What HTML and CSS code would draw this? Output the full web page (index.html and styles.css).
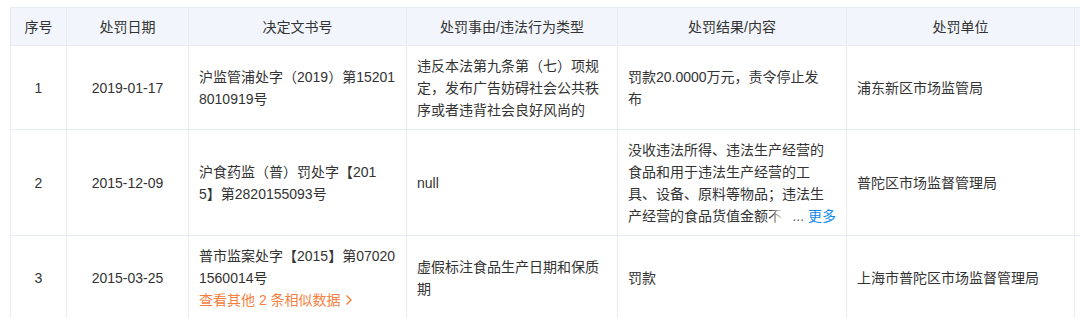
FILE: index.html
```html
<!DOCTYPE html>
<html lang="zh">
<head>
<meta charset="utf-8">
<link rel="stylesheet" href="styles.css">
</head>
<body>
<div class="wrap">
<table class="tbl">
  <colgroup>
    <col class="c1"><col class="c2"><col class="c3"><col class="c4"><col class="c5"><col class="c6"><col class="c7">
  </colgroup>
  <thead>
    <tr>
      <th>序号</th><th>处罚日期</th><th>决定文书号</th><th>处罚事由/违法行为类型</th><th>处罚结果/内容</th><th>处罚单位</th><th></th>
    </tr>
  </thead>
  <tbody>
    <tr class="r1">
      <td class="ctr">1</td>
      <td class="ctr">2019-01-17</td>
      <td>沪监管浦处字（2019）第15201<br>8010919号</td>
      <td>违反本法第九条第（七）项规定，发布广告妨碍社会公共秩序或者违背社会良好风尚的</td>
      <td class="res-narrow">罚款20.0000万元，责令停止发布</td>
      <td>浦东新区市场监管局</td>
      <td></td>
    </tr>
    <tr class="r2">
      <td class="ctr">2</td>
      <td class="ctr">2015-12-09</td>
      <td>沪食药监（普）罚处字【201<br>5】第2820155093号</td>
      <td>null</td>
      <td>
        <div class="clip">
          <div class="clip-text">没收违法所得、违法生产经营的食品和用于违法生产经营的工具、设备、原料等物品；违法生产经营的食品货值金额不足一万元的，并处五万元以上十万元以下罚款</div>
          <span class="more"><span class="dots">...</span> <a class="more-link">更多</a></span>
        </div>
      </td>
      <td>普陀区市场监督管理局</td>
      <td></td>
    </tr>
    <tr class="r3">
      <td class="ctr">3</td>
      <td class="ctr">2015-03-25</td>
      <td>普市监案处字【2015】第07020<br>1560014号<br><a class="similar">查看其他 2 条相似数据<svg class="chev" width="8" height="12" viewBox="0 0 8 12"><path d="M1.5 1.5 L6 6 L1.5 10.5" fill="none" stroke="currentColor" stroke-width="1.4"/></svg></a></td>
      <td>虚假标注食品生产日期和保质期</td>
      <td>罚款</td>
      <td>上海市普陀区市场监督管理局</td>
      <td></td>
    </tr>
  </tbody>
</table>
</div>
</body>
</html>
```
FILE: styles.css
```css
html, body {
  margin: 0;
  padding: 0;
  background: #fff;
}
.wrap {
  padding: 7px 0 0 10px;
  width: 1070px;
  height: 311px;
  overflow: hidden;
}
.tbl {
  border-collapse: collapse;
  table-layout: fixed;
  width: 1100px;
  font-family: "Liberation Sans", "Noto Sans CJK SC", sans-serif;
  font-size: 14px;
  color: #333;
}
.c1 { width: 56px; }
.c2 { width: 122px; }
.c3 { width: 218px; }
.c4 { width: 211px; }
.c5 { width: 229px; }
.c6 { width: 228px; }
.c7 { width: 36px; }
.tbl th, .tbl td {
  border: 1px solid #e7ebf2;
  padding: 0 10px;
  line-height: 22px;
  vertical-align: middle;
  text-align: left;
  word-break: break-all;
}
.tbl th {
  background: #f2f6fc;
  font-weight: normal;
  text-align: center;
  height: 37px;
  padding: 0 4px;
}
.tbl td.ctr { text-align: center; }
.tbl td.res-narrow { padding-right: 22px; }
.r1 td { height: 83px; }
.r2 td { height: 105px; }
.r3 td { height: 83px; }
.clip {
  position: relative;
  height: 88px;
  overflow: hidden;
}
.clip-text {
  line-height: 22px;
}
.more {
  position: absolute;
  right: 0;
  bottom: 0;
  padding-left: 22px;
  line-height: 22px;
  background: linear-gradient(to right, rgba(255,255,255,0), #fff 14px);
}
.dots { color: #666; }
.more-link {
  color: #128bed;
}
.similar {
  color: #f5803e;
  display: inline-flex;
  align-items: center;
  gap: 4px;
}
.chev { display: block; }
```
